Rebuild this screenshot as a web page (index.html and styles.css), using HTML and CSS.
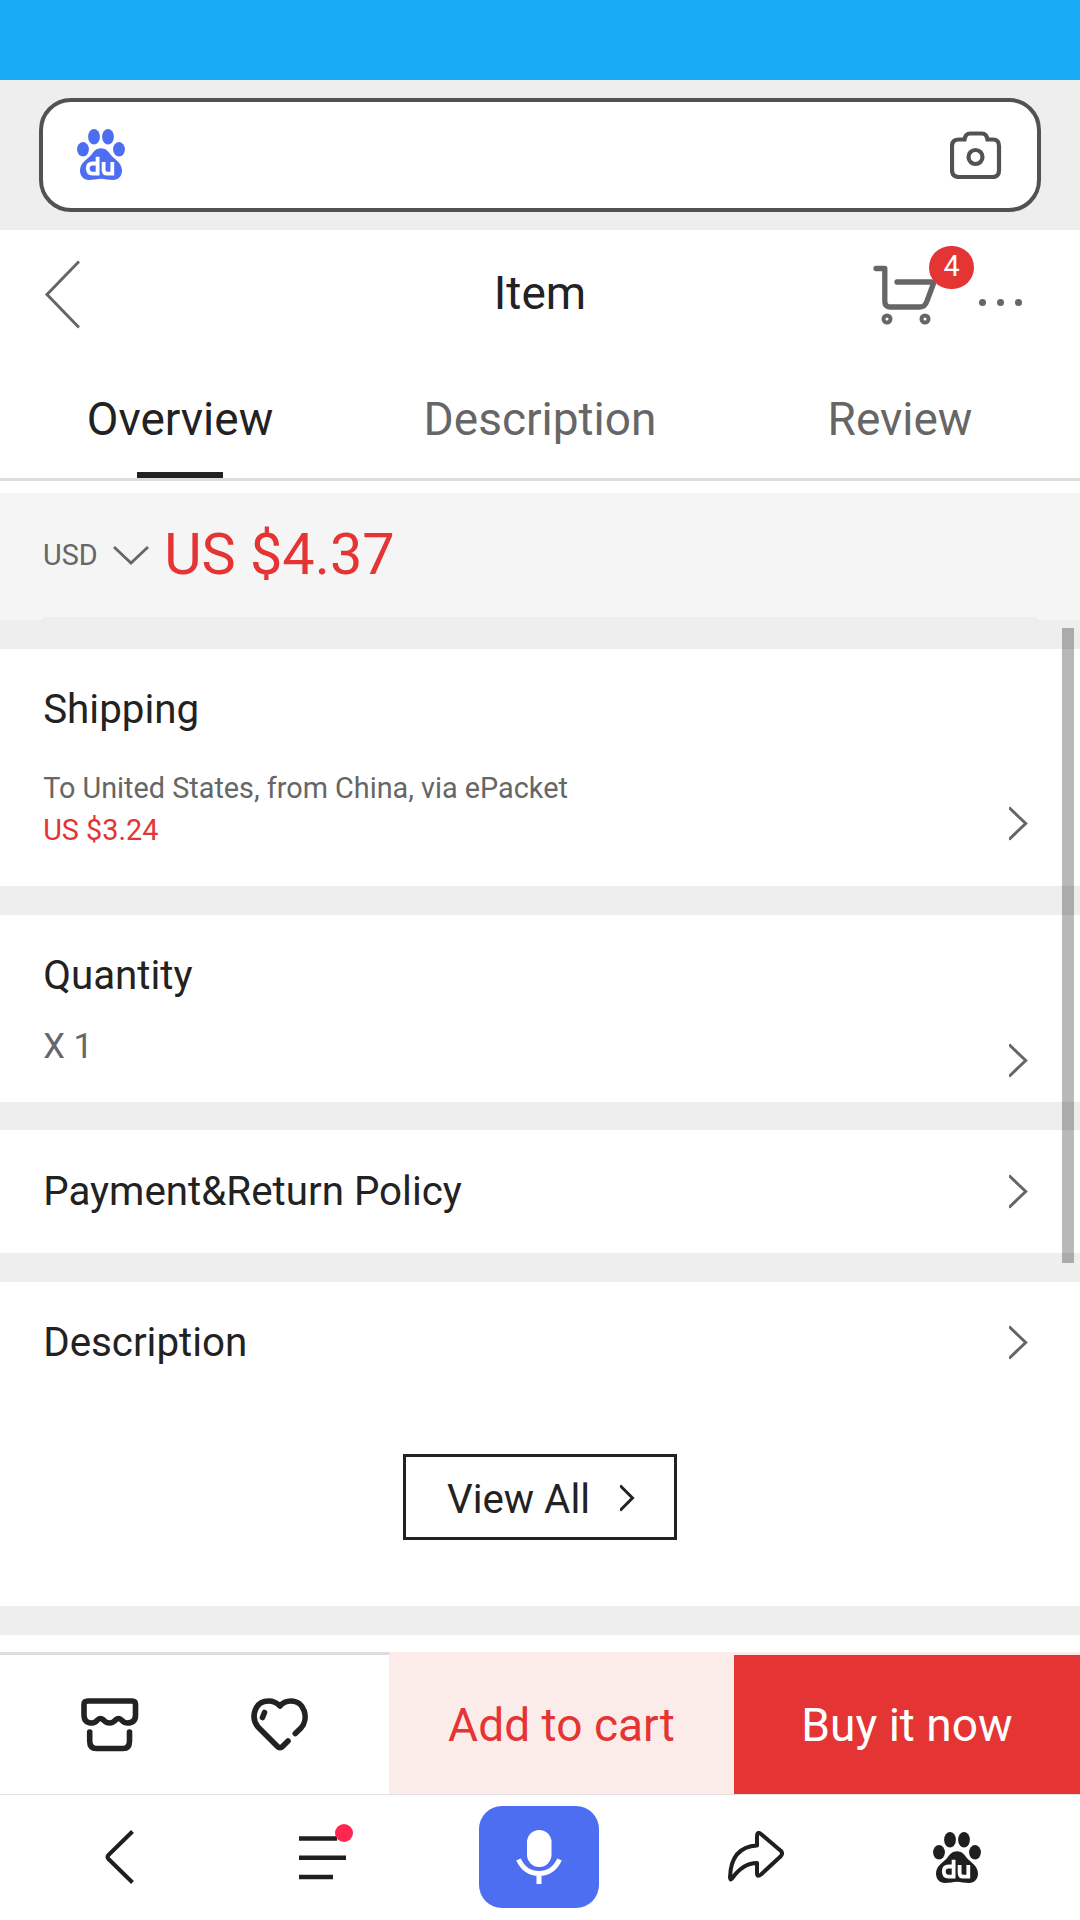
FILE: index.html
```html
<!DOCTYPE html>
<html lang="en">
<head>
<meta charset="utf-8">
<title>Item</title>
<link rel="stylesheet" href="styles.css">
</head>
<body>
<svg class="defs" aria-hidden="true">
  <symbol id="paw" viewBox="0 0 48 51">
    <ellipse cx="6" cy="20.300" rx="5.900" ry="7.200"/>
    <ellipse cx="17" cy="7.800" rx="5.900" ry="7.700"/>
    <ellipse cx="31" cy="7.800" rx="5.900" ry="7.700"/>
    <ellipse cx="42" cy="20.300" rx="5.900" ry="7.200"/>
    <path d="M24 19.200C28.500 19.200 31 22 33.500 25.500C37 30 45 33.500 45 41.500C45 47 41.500 51 36 51C31.500 51 28 49.700 24 49.700S16.500 51 12 51C6.500 51 3 47 3 41.500C3 33.500 11 30 14.500 25.500C17 22 19.500 19.200 24 19.200Z"/>
    <path class="paw-mark" d="M20.600 27.800V44.600H15.500C12 44.600 10.800 42.500 10.800 39.300S12.500 34.500 15.500 34.500H20.600M26.600 33V41Q26.600 44.600 30 44.600H35.300V33"/>
  </symbol>
  <symbol id="chevron" viewBox="0 0 20 38">
    <path d="M0 2.500L16.700 18.500L0 34.500" fill="none" stroke="currentColor" stroke-width="3"/>
  </symbol>
</svg>

<div class="status"></div>
<div class="search-wrap">
  <div class="search">
    <svg class="paw blue"><use href="#paw"/></svg>
    <svg class="camera" viewBox="0 0 52 48">
      <path d="M9 8.500H14.500Q15.500 2.500 20 2.500H32Q36.500 2.500 37.500 8.500H43Q49 8.500 49 15V39Q49 46 43 46H9Q2 46 2 39V15Q2 8.500 9 8.500Z"/>
      <circle cx="25.500" cy="26" r="7"/>
    </svg>
  </div>
</div>

<header class="header">
  <svg class="back" viewBox="0 0 36 70"><path d="M35 1.500L3 34.500L35 67.500"/></svg>
  <h1>Item</h1>
  <div class="actions">
    <div class="cart-box">
      <svg class="cart" viewBox="0 0 64 60">
        <path d="M3 3.500H11.800V36Q11.800 42 17 42H47Q52 42 54 36L60.500 18.500Q60.500 17 57 17H24"/>
        <circle cx="14" cy="54" r="3.500"/><circle cx="52" cy="54" r="3.500"/>
      </svg>
      <span class="badge">4</span>
    </div>
    <div class="dots"><i></i><i></i><i></i></div>
  </div>
</header>

<nav class="tabs">
  <span class="tab active">Overview</span>
  <span class="tab">Description</span>
  <span class="tab">Review</span>
</nav>

<main class="content">
  <section class="price">
    <span class="currency">USD</span>
    <svg class="down" viewBox="0 0 36 19"><path d="M1 1L18 17L35 1"/></svg>
    <strong>US $4.37</strong>
  </section>
  <section class="card shipping">
    <h2>Shipping</h2>
    <p class="route">To United States, from China, via ePacket</p>
    <p class="fee">US $3.24</p>
    <svg class="chev"><use href="#chevron"/></svg>
  </section>
  <section class="card quantity">
    <h2>Quantity</h2>
    <p class="count">X 1</p>
    <svg class="chev"><use href="#chevron"/></svg>
  </section>
  <section class="card policy">
    <h2>Payment&amp;Return Policy</h2>
    <svg class="chev"><use href="#chevron"/></svg>
  </section>
  <section class="card description">
    <h2>Description</h2>
    <svg class="chev"><use href="#chevron"/></svg>
    <a class="view-all"><span>View All</span>
      <svg viewBox="0 0 15 28"><path d="M0 1.500L12.500 14L0 26.500"/></svg>
    </a>
  </section>
  <div class="scrollbar"></div>
</main>

<div class="buybar">
  <div class="tools">
    <svg class="shop" viewBox="0 0 58 54">
      <path d="M7 3H51Q54.500 3 54.500 6.500V17Q54.500 25 46.500 25Q43 25 40.500 22T34.500 22Q32 25 28.500 25T22.500 22Q19 19 16.500 22T11 25Q3 25 3 17V6.500Q3 3 7 3Z"/>
      <path d="M8.700 34V43Q8.700 50.500 15.500 50.500H42Q48.500 50.500 48.500 43V34"/>
    </svg>
    <svg class="heart" viewBox="0 0 58 54">
      <path d="M44.300 35.500L50 30C58 21 54 3 40 3Q33 3 29 8Q24 3 17.500 3C4 3 -1 19 7 29L26.500 48.500Q29 51 31.500 48.500L37 43"/>
      <path d="M13.500 14.500L11.500 19.500"/>
    </svg>
  </div>
  <a class="add">Add to cart</a>
  <a class="buy">Buy it now</a>
</div>

<footer class="toolbar">
  <svg class="nav-back" viewBox="0 0 30 56"><path d="M27.500 2.500L3.500 26Q1.500 28 3.500 30L27.500 53.500"/></svg>
  <svg class="menu" viewBox="0 0 54 56"><path d="M0 14.500H38M0 33.700H47M0 53H34"/><circle cx="45" cy="9" r="9"/></svg>
  <div class="mic"><svg viewBox="0 0 46 54">
    <rect x="11" y="0" width="24.500" height="37" rx="12.200"/>
    <path d="M2.500 29.500Q9 43.500 23 43.500T43.500 29.500M23 43V54"/>
  </svg></div>
  <svg class="share" viewBox="0 0 56 52"><path d="M29 14.500V5Q29 0 33 3L53 20Q55 22 53 25L33 43.500Q29 46.500 29 42V32Q15 32 4 47.500Q2 50 2 46Q3 16 29 14.500Z"/></svg>
  <svg class="paw dark"><use href="#paw"/></svg>
</footer>
</body>
</html>
```
FILE: styles.css
```css
* { box-sizing: border-box; margin: 0; padding: 0; }
body { width: 1080px; height: 1920px; overflow: hidden; display: flex; flex-direction: column; background: #fff; color: #222; font-family: Roboto, sans-serif; }
svg { display: block; flex: none; }
.defs { position: absolute; width: 0; height: 0; }
.status { height: 80px; background: #1aabf7; flex: none; }
.search-wrap { height: 150px; padding: 18px 39px; background: #eee; flex: none; }
.search { height: 114px; border: 4px solid #525252; border-radius: 32px; background: #fff; display: flex; justify-content: space-between; padding: 27px 35px 0 34px; }
.paw { width: 48px; height: 51px; }
.paw-mark { fill: none; stroke: #fff; stroke-width: 3.800; }
.blue { fill: #4e6ef2; }
.dark { fill: #1f1f1f; }
.camera { width: 52px; height: 48px; margin-top: 2px; fill: none; stroke: #525252; stroke-width: 4.200; }

.header { height: 130px; flex: none; display: grid; grid-template-columns: 1fr auto 1fr; }
.back { width: 36px; height: 70px; margin: 30px 0 0 44px; fill: none; stroke: #666; stroke-width: 3; }
h1 { font-size: 46px; line-height: 54px; font-weight: 400; padding-top: 36px; }
.actions { display: flex; justify-content: flex-end; padding-right: 58px; }
.cart-box { position: relative; width: 64px; height: 60px; margin-top: 35px; }
.cart { width: 64px; height: 60px; fill: none; stroke: #666; stroke-width: 5.300; stroke-linecap: round; stroke-linejoin: round; }
.cart circle { stroke-width: 4; }
.badge { position: absolute; left: 56px; top: -19px; width: 45px; height: 43px; border-radius: 22px; background: #e43434; color: #fff; font-size: 28.800px; line-height: 41px; text-align: center; }
.dots { display: flex; gap: 11px; margin: 69px 0 0 42px; }
.dots i { width: 7px; height: 7px; background: #666; border-radius: 50%; }

.tabs { height: 121px; flex: none; display: grid; grid-template-columns: repeat(3, 360px); border-bottom: 3px solid #ddd; text-align: center; }
.tab { font-size: 46px; line-height: 54px; padding-top: 32px; color: #666; }
.active { color: #222; background: linear-gradient(#222, #222) 137px 100% / 86px 6px no-repeat; }

.content { position: relative; height: 1171px; flex: none; padding-top: 12px; }
.price { height: 127px; padding-left: 43px; display: flex; background: linear-gradient(#ededed, #ededed) 43px 100% / 994px 3px no-repeat #f5f5f5; }
.currency { font-size: 28.800px; line-height: 34px; margin-top: 45px; color: #666; }
.down { width: 36px; height: 19px; margin: 53px 0 0 15px; fill: none; stroke: #666; stroke-width: 2.800; }
.price strong { font-size: 57.600px; line-height: 68px; font-weight: 400; color: #e43434; margin: 28px 0 0 15.500px; }
.card { position: relative; padding-left: 43.200px; border-top: 29px solid #eee; }
h2 { font-size: 40.320px; line-height: 47px; font-weight: 400; }
.chev { position: absolute; right: 51px; width: 20px; height: 38px; color: #666; }
.shipping { height: 266px; padding-top: 37px; }
.shipping .chev { top: 156px; }
.route, .fee { font-size: 28.800px; line-height: 34px; color: #666; }
.route { margin-top: 38px; }
.fee { margin-top: 8px; color: #e43434; }
.quantity { height: 216px; padding-top: 37px; }
.quantity .chev { top: 127px; }
.count { font-size: 34.560px; line-height: 42px; margin-top: 26px; color: #666; }
.policy { height: 151px; border-top-width: 28px; padding-top: 38px; }
.policy .chev { top: 43px; }
.description { height: 382px; padding-top: 37px; border-bottom: 29px solid #eee; }
.description .chev { top: 42px; }
.view-all { width: 274px; height: 86px; margin: 88px 0 0 359.800px; border: 3px solid #222; display: flex; padding: 19px 0 0 41px; font-size: 40.320px; line-height: 47px; }
.view-all svg { width: 15px; height: 28px; margin: 8px 0 0 30px; fill: none; stroke: #222; stroke-width: 3; }
.scrollbar { position: absolute; right: 6px; top: 147px; width: 12px; height: 635px; background: rgba(0, 0, 0, .28); }

.buybar { height: 142px; flex: none; display: grid; grid-template-columns: 389px 345px 346px; font-size: 46.080px; }
.tools { border-top: 3px solid #ddd; display: flex; gap: 112px; padding: 43px 0 0 81px; }
.shop, .heart { width: 58px; height: 54px; fill: none; stroke: #222; stroke-width: 5.600; stroke-linecap: round; stroke-linejoin: round; }
.add, .buy { height: 142px; line-height: 138px; text-align: center; }
.add { background: #fbecea; color: #e43434; padding-top: 4px; }
.buy { border-top: 3px solid #fbecea; background: #e43434; color: #fff; padding-top: 1px; }
.toolbar { height: 126px; flex: none; border-top: 1px solid #e0e0e0; display: flex; }
.nav-back { width: 30px; height: 56px; margin: 34px 0 0 105px; fill: none; stroke: #1f1f1f; stroke-width: 4; }
.menu { width: 54px; height: 56px; margin: 29px 0 0 164px; stroke: #1f1f1f; stroke-width: 4.500; }
.menu circle { fill: #ff2650; stroke: none; }
.mic { width: 120px; height: 102px; border-radius: 23px; margin: 11px 0 0 126px; background: #4e6ef2; display: flex; justify-content: center; padding-top: 24px; }
.mic svg { width: 46px; height: 54px; fill: #fff; }
.mic path { fill: none; stroke: #fff; stroke-width: 5; }
.share { width: 56px; height: 52px; margin: 36px 0 0 129px; fill: none; stroke: #1f1f1f; stroke-width: 4; stroke-linejoin: round; }
.toolbar .paw { margin: 37px 0 0 149px; }
```
